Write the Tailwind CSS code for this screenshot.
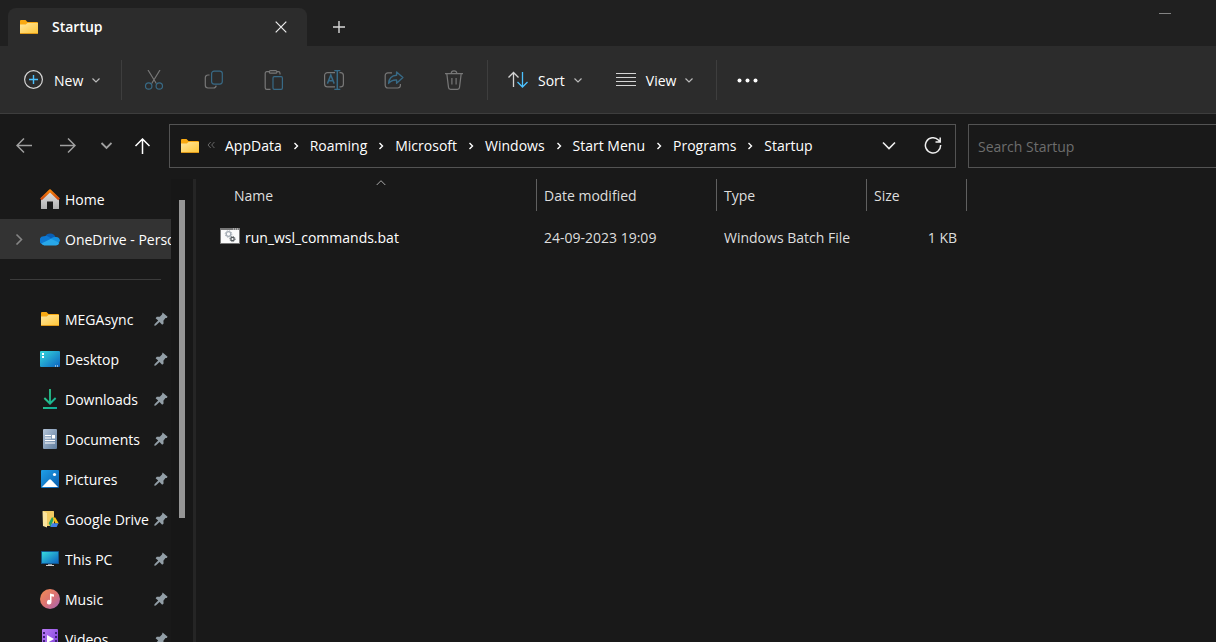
<!DOCTYPE html>
<html lang="en">
<head>
<meta charset="utf-8">
<meta name="viewport" content="width=device-width, initial-scale=1">
<title>Startup</title>
<script src="https://cdn.jsdelivr.net/npm/@tailwindcss/browser@4"></script>
</head>
<body class="flex h-screen flex-col overflow-hidden bg-[#191919] font-['Open_Sans','Noto_Sans',sans-serif] text-sm text-white">

<svg class="absolute size-0" aria-hidden="true">
  <defs>
    <linearGradient id="gFolder" x1="0" y1="0" x2="1" y2="1"><stop offset="0" stop-color="#ffe7a0"/><stop offset="1" stop-color="#ffc637"/></linearGradient>
    <linearGradient id="gWall" x1="0" y1="0" x2="0" y2="1"><stop offset="0" stop-color="#e4e4e4"/><stop offset="1" stop-color="#b0b0b0"/></linearGradient>
    <linearGradient id="gRoof" x1="0" y1="0" x2="0" y2="1"><stop offset="0" stop-color="#ff8c0a"/><stop offset="1" stop-color="#c8400c"/></linearGradient>
    <linearGradient id="gScreen" x1="0" y1="0" x2="1" y2="1"><stop offset="0" stop-color="#36d9dd"/><stop offset="1" stop-color="#0c62c0"/></linearGradient>
    <linearGradient id="gDown" x1="0" y1="0" x2="1" y2="1"><stop offset="0" stop-color="#35cf86"/><stop offset="1" stop-color="#0ea99a"/></linearGradient>
    <linearGradient id="gDoc" x1="0" y1="0" x2="1" y2="1"><stop offset="0" stop-color="#b4c4d8"/><stop offset="1" stop-color="#5f7d9e"/></linearGradient>
    <linearGradient id="gPic" x1="0" y1="0" x2="1" y2="1"><stop offset="0" stop-color="#1fa0e8"/><stop offset="1" stop-color="#0a5cae"/></linearGradient>
    <linearGradient id="gMusic" x1="0" y1="0" x2="1" y2="1"><stop offset="0" stop-color="#f48d52"/><stop offset=".5" stop-color="#dc7372"/><stop offset="1" stop-color="#a263b8"/></linearGradient>
    <linearGradient id="gVideo" x1="0" y1="0" x2="1" y2="1"><stop offset="0" stop-color="#bb7cf6"/><stop offset="1" stop-color="#7a3bd8"/></linearGradient>
  </defs>
  <symbol id="folder" viewBox="0 0 20 20">
    <path d="M1 4a1 1 0 0 1 1-1h4.500l2 2H18a1 1 0 0 1 1 1v3H1z" fill="#f9a912"/>
    <path d="M1 7.600h5.800L8.500 6H19v10.500H1z" fill="url(#gFolder)"/>
    <path d="M1 16h18v.4a.6.6 0 0 1-.6.600H1.600a.6.6 0 0 1-.6-.6z" fill="#e09a1a"/>
  </symbol>
  <symbol id="down" viewBox="0 0 12 12"><path d="M2.500 4.500L6 8l3.500-3.500" fill="none" stroke="#bbb" stroke-width="1.200"/></symbol>
  <symbol id="right" viewBox="0 0 12 12"><path d="M4.500 3l3 3-3 3" fill="none" stroke="currentColor" stroke-width="1.400"/></symbol>
  <symbol id="pin" viewBox="0 0 14 14">
    <path d="M8.600.6l5 4.200-.9 1.200-1.200.1-2.100 2.700.2 2.600-1.400 1.300-2.700-2.600L1.800 13.600l-1.500.1.200-1.400 3.700-3.700L1.600 6.200l1.200-1.400 3-.1 2.200-2.300z" fill="#929ea6"/>
  </symbol>
</svg>

<header class="flex h-[46px] shrink-0 items-end bg-[#202020] pl-2">
  <div class="flex h-[38px] w-[299px] items-center rounded-t-lg bg-[#2c2c2c] pl-[11px] pr-4">
    <svg class="size-5"><use href="#folder"/></svg>
    <h1 class="ml-[13px] font-semibold">Startup</h1>
    <button class="ml-auto flex size-5 items-center justify-center" aria-label="Close tab">
      <svg class="size-3" viewBox="0 0 12 12"><path d="M.7.7l10.600 10.600M11.300.7L.7 11.300" stroke="#eee" stroke-width="1.200"/></svg>
    </button>
  </div>
  <button class="ml-[22px] flex h-[38px] w-5 items-center justify-center" aria-label="New tab">
    <svg class="size-3" viewBox="0 0 12 12"><path d="M6 0v12M0 6h12" stroke="#d8d8d8" stroke-width="1.400"/></svg>
  </button>
  <button class="ml-auto mr-9 flex h-[46px] w-[30px] items-start justify-center pt-[13px]" aria-label="Minimize"><span class="h-px w-3 bg-[#838383]"></span></button>
</header>

<div role="toolbar" aria-label="Commands" class="flex h-[68px] shrink-0 items-center border-b border-[#3d3d3d] bg-[#2c2c2c]">
  <button class="flex h-10 w-[121px] items-center pl-[23px]">
    <svg class="size-5" viewBox="0 0 20 20" fill="none"><circle cx="10.500" cy="9.500" r="8.900" stroke="#d4d4d4" stroke-width="1.200"/><path d="M10.500 5v9M6 9.500h9" stroke="#4cc2ff" stroke-width="1.400"/></svg>
    <span class="ml-[11px] pt-0.5">New</span>
    <svg class="ml-[7px] size-3"><use href="#down"/></svg>
  </button>
  <span class="h-10 w-px bg-[#3e3e3e]"></span>
  <div class="ml-0.5 mr-[3px] flex">
    <button disabled class="flex h-10 w-[60px] items-center justify-center" aria-label="Cut">
      <svg class="size-5" viewBox="0 0 20 20" fill="none" stroke-width="1.200"><path d="M4 0l8.300 13.500M16 0L7.700 13.500" stroke="#777"/><circle cx="4.700" cy="16" r="3.200" stroke="#386a86"/><circle cx="15.300" cy="16" r="3.200" stroke="#386a86"/></svg>
    </button>
    <button disabled class="flex h-10 w-[60px] items-center justify-center" aria-label="Copy">
      <svg class="size-5" viewBox="0 0 20 20" fill="none" stroke-width="1.200"><path d="M5.500 5H4a2.700 2.700 0 0 0-2.700 2.700v7.600A2.700 2.700 0 0 0 4 18h5.500a2.700 2.700 0 0 0 2.700-2.300" stroke="#777"/><rect x="7.600" y="1.100" width="10.700" height="13" rx="2.500" stroke="#386a86"/></svg>
    </button>
    <button disabled class="flex h-10 w-[60px] items-center justify-center" aria-label="Paste">
      <svg class="size-5" viewBox="0 0 20 20" fill="none" stroke-width="1.200"><path d="M6.500 19.400H2.800a1.600 1.600 0 0 1-1.600-1.600V3.200a1.600 1.600 0 0 1 1.600-1.600h2.500m7.700 0h1.400A1.600 1.600 0 0 1 16 3.200v1.300" stroke="#777"/><rect x="5.300" y=".6" width="7.600" height="2.600" rx="1.300" stroke="#777"/><rect x="9" y="6.600" width="9.400" height="12.800" rx="1.300" stroke="#386a86"/></svg>
    </button>
    <button disabled class="flex h-10 w-[60px] items-center justify-center" aria-label="Rename">
      <svg class="size-5" viewBox="0 0 20 20" fill="none" stroke-width="1.200"><path d="M11 2.600H3.500A2.900 2.900 0 0 0 .6 5.500v8.500a2.900 2.900 0 0 0 2.900 2.900H11M15.500 2.600h1A2.900 2.900 0 0 1 19.400 5.500v8.500a2.900 2.900 0 0 1-2.900 2.900h-1" stroke="#777"/><path d="M3.400 13.600L6.800 5l3.400 8.600M4.600 10.700H9M10.300.6h6M10.300 19.400h6M13.300.6v18.800" stroke="#386a86" stroke-width="1.500"/></svg>
    </button>
    <button disabled class="flex h-10 w-[60px] items-center justify-center" aria-label="Share">
      <svg class="size-5" viewBox="0 0 20 20" fill="none" stroke-width="1.200" stroke-linejoin="round"><path d="M8 2.800H3.900A2.700 2.700 0 0 0 1.200 5.500v9.800A2.700 2.700 0 0 0 3.900 18h9.800a2.700 2.700 0 0 0 2.700-2.700V14" stroke="#777"/><path d="M12.600 2l6.300 5.600-6.300 5.600V10C9 9.800 6.500 11 4.600 13.400 5 8.500 8 5.400 12.600 5.200z" stroke="#386a86" stroke-width="1.400"/></svg>
    </button>
    <button disabled class="flex h-10 w-[60px] items-center justify-center" aria-label="Delete">
      <svg class="size-5" viewBox="0 0 20 20" fill="none" stroke="#777" stroke-width="1.200"><path d="M1 3.600h18M2.800 3.600l1.700 13.800a2 2 0 0 0 2 1.900h7a2 2 0 0 0 2-1.900l1.700-13.800M7.200 3.600a2.800 2.800 0 0 1 5.600 0M7.900 8v6.500M12.100 8v6.500"/></svg>
    </button>
  </div>
  <span class="h-10 w-px bg-[#3e3e3e]"></span>
  <button class="ml-5 flex h-10 items-center">
    <svg class="size-5" viewBox="0 0 20 20" fill="none" stroke-width="1.300"><path d="M5.500 17V2.500M.5 7.500l5-5 5 5" stroke="#d4d4d4"/><path d="M14.500 2v14.500M9.500 12l5 5 5-5" stroke="#4cc2ff"/></svg>
    <span class="ml-2.5 pt-0.5">Sort</span>
    <svg class="ml-[7px] size-3"><use href="#down"/></svg>
  </button>
  <button class="ml-8 flex h-10 w-[100px] items-center">
    <svg class="size-5" viewBox="0 0 20 20" stroke="#d4d4d4"><path d="M0 3.500h20M0 7.500h20M0 11.500h20M0 15.500h20" stroke-width="1.200"/></svg>
    <span class="ml-2.5 pt-0.5">View</span>
    <svg class="ml-[7px] size-3"><use href="#down"/></svg>
  </button>
  <span class="h-10 w-px bg-[#3e3e3e]"></span>
  <button class="ml-5 flex h-10 items-center" aria-label="More options">
    <svg class="h-5 w-[22px]" viewBox="0 0 22 20" fill="#fff"><circle cx="2.500" cy="10.500" r="2"/><circle cx="10.500" cy="10.500" r="2"/><circle cx="18.500" cy="10.500" r="2"/></svg>
  </button>
</div>

<div class="flex shrink-0 items-center pb-[11px] pl-0.5 pt-2.5">
  <button class="flex h-11 w-11 items-center justify-center" aria-label="Back"><svg class="size-4" viewBox="0 0 16 16"><path d="M16 7.500H1M8 .5l-7 7 7 7" fill="none" stroke="#a0a0a0" stroke-width="1.500"/></svg></button>
  <button class="flex h-11 w-11 items-center justify-center" aria-label="Forward"><svg class="size-4" viewBox="0 0 16 16"><path d="M0 7.500h15M8 .5l7 7-7 7" fill="none" stroke="#a0a0a0" stroke-width="1.500"/></svg></button>
  <button class="flex h-11 w-8 items-center justify-center" aria-label="Recent locations"><svg class="size-3" viewBox="0 0 12 12"><path d="M1.500 3l5 5 5-5" fill="none" stroke="#a0a0a0" stroke-width="1.800"/></svg></button>
  <button class="flex h-11 w-10 items-center justify-center" aria-label="Up"><svg class="size-4" viewBox="0 0 16 16"><path d="M8.500 16V1M1.500 8l7-7 7 7" fill="none" stroke="#fff" stroke-width="1.500"/></svg></button>
  <nav aria-label="Address" class="ml-[7px] flex h-11 min-w-0 flex-[775] items-center border border-[#535353] pl-2.5">
    <svg class="size-5 shrink-0"><use href="#folder"/></svg>
    <svg class="ml-[7px] mr-2.5 size-2 shrink-0" viewBox="0 0 8 8"><path d="M3.700 0L1 3l2.700 3M7.400 0L4.700 3l2.700 3" fill="none" stroke="#666"/></svg>
    <ol class="flex items-center whitespace-nowrap">
      <li class="flex items-center"><a href="#">AppData</a><svg class="mx-2 size-3"><use href="#right"/></svg></li>
      <li class="flex items-center"><a href="#">Roaming</a><svg class="mx-2 size-3"><use href="#right"/></svg></li>
      <li class="flex items-center"><a href="#">Microsoft</a><svg class="mx-2 size-3"><use href="#right"/></svg></li>
      <li class="flex items-center"><a href="#">Windows</a><svg class="mx-2 size-3"><use href="#right"/></svg></li>
      <li class="flex items-center"><a href="#">Start Menu</a><svg class="mx-2 size-3"><use href="#right"/></svg></li>
      <li class="flex items-center"><a href="#">Programs</a><svg class="mx-2 size-3"><use href="#right"/></svg></li>
      <li><a href="#">Startup</a></li>
    </ol>
    <button class="ml-auto flex h-10 w-11 shrink-0 items-center justify-center" aria-label="Previous locations"><svg class="h-3 w-3.5" viewBox="0 0 14 12"><path d="M1 2.500l6 6 6-6" fill="none" stroke="#eee" stroke-width="1.600"/></svg></button>
    <button class="flex h-10 w-11 shrink-0 items-center justify-center" aria-label="Refresh"><svg class="size-[18px]" viewBox="0 0 18 18" fill="none" stroke="#eee" stroke-width="1.500"><path d="M16.600 8a7.600 7.600 0 1 1-2.200-5L16 4.600M16.200.4v4.500h-4.700"/></svg></button>
  </nav>
  <input type="search" aria-label="Search Startup" placeholder="Search Startup" class="-mr-px ml-3 h-11 min-w-0 flex-[229] border border-[#535353] bg-transparent px-[9px] placeholder:text-[#6d6d6d]">
</div>

<main class="flex min-h-0 flex-1">
  <nav aria-label="Folders" class="w-[171px] shrink-0 overflow-hidden whitespace-nowrap">
    <a href="#" class="flex h-10 items-center pl-10"><svg class="mr-[5px] size-5 shrink-0" viewBox="0 0 20 20"><path d="M1 9l9-8 9 8v10.500a.5.500 0 0 1-.5.500H13v-7.500H7V20H1.500a.5.500 0 0 1-.5-.5z" fill="url(#gWall)"/><path d="M9.300.5a1 1 0 0 1 1.400 0L20 9.500l-1.800 1.700L10 3.400l-8.200 7.800L0 9.500z" fill="url(#gRoof)"/></svg><span class="pt-0.5">Home</span></a>
    <a href="#" class="flex h-10 items-center bg-[#333] pl-[13px]"><svg class="mr-[15px] size-3 shrink-0" viewBox="0 0 12 12"><path d="M3.500 1.500l5 5-5 5" fill="none" stroke="#858585" stroke-width="1.600"/></svg><svg class="mr-[5px] size-5 shrink-0" viewBox="0 0 20 20"><path d="M5 7.500a5.800 5.800 0 0 1 10.500.5L12 12.500z" fill="#0a5fb4"/><path d="M4.200 7.200c2-.6 4 0 5.500 1.300L13 11 3 15.500a4.200 4.200 0 0 1 1.200-8.300z" fill="#0d78d2"/><path d="M10 10.500c1.500-2 3.800-3 6-2.400A4.200 4.200 0 0 1 20 12l-3 3z" fill="#1490df"/><path d="M1.300 14.500L10.500 10c1 0 2 .6 3 1l5.900 2.800a3.600 3.600 0 0 1-3.400 2.700H4.300a4.300 4.300 0 0 1-3-2z" fill="#28a8ea"/></svg><span class="pt-0.5">OneDrive - Personal</span></a>
    <div class="flex h-10 items-center"><hr class="ml-2.5 w-[151px] border-[#3b3b3b]"></div>
    <a href="#" class="flex h-10 items-center pl-10 pr-[3px]"><svg class="mr-[5px] size-5 shrink-0"><use href="#folder"/></svg><span class="min-w-0 flex-1 overflow-hidden pt-0.5">MEGAsync</span><svg class="ml-0.5 size-3.5 shrink-0"><use href="#pin"/></svg></a>
    <a href="#" class="flex h-10 items-center pl-10 pr-[3px]"><svg class="mr-[5px] size-5 shrink-0" viewBox="0 0 20 20"><rect y="2" width="20" height="16" rx="1" fill="url(#gScreen)"/><path d="M2 4h2v2H2zM2 7h2v2H2zM15 16.500h1v1h-1zM17 16.500h1v1h-1z" fill="#fff"/></svg><span class="min-w-0 flex-1 overflow-hidden pt-0.5">Desktop</span><svg class="ml-0.5 size-3.5 shrink-0"><use href="#pin"/></svg></a>
    <a href="#" class="flex h-10 items-center pl-10 pr-[3px]"><svg class="mr-[5px] size-5 shrink-0" viewBox="0 0 20 20"><path d="M9.100 0h1.800v12.200L15 8.300l1.300 1.400L10 16 3.700 9.700 5 8.300l4.100 3.900zM3 18h14v2H3z" fill="url(#gDown)"/></svg><span class="min-w-0 flex-1 overflow-hidden pt-0.5">Downloads</span><svg class="ml-0.5 size-3.5 shrink-0"><use href="#pin"/></svg></a>
    <a href="#" class="flex h-10 items-center pl-10 pr-[3px]"><svg class="mr-[5px] size-5 shrink-0" viewBox="0 0 20 20"><rect x="3" width="14" height="20" rx="1" fill="url(#gDoc)"/><path d="M5 6h6v1H5zM5 8.500h6v1H5zM5 11h10v1H5zM5 13.500h10v1H5zM12 6h3v3.500h-3z" fill="#fff"/></svg><span class="min-w-0 flex-1 overflow-hidden pt-0.5">Documents</span><svg class="ml-0.5 size-3.5 shrink-0"><use href="#pin"/></svg></a>
    <a href="#" class="flex h-10 items-center pl-10 pr-[3px]"><svg class="mr-[5px] size-5 shrink-0" viewBox="0 0 20 20"><rect x="1" y="1" width="18" height="18" rx="1" fill="url(#gPic)"/><path d="M2 18l7-7.300a1.400 1.400 0 0 1 2 0L18 18z" fill="#fff"/><circle cx="14.500" cy="5.500" r="1.600" fill="#fff"/></svg><span class="min-w-0 flex-1 overflow-hidden pt-0.5">Pictures</span><svg class="ml-0.5 size-3.5 shrink-0"><use href="#pin"/></svg></a>
    <a href="#" class="flex h-10 items-center pl-10 pr-[3px]"><svg class="mr-[5px] size-5 shrink-0" viewBox="0 0 20 20"><path d="M3 2h10.500a.5.500 0 0 1 .5.500V17H3z" fill="#f1cb63"/><path d="M2.500 2L7 4v14.500L3 17z" fill="#fbe49d"/><path d="M11.800 8.500h2.600l-3.800 9.200-1.900-3.400z" fill="#1fa463"/><path d="M12.500 8.500h2.800l3.500 6h-3.300z" fill="#fbc116"/><path d="M12.100 14.200h6.300L16.700 18h-6.400z" fill="#3f7fe8"/></svg><span class="min-w-0 flex-1 overflow-hidden pt-0.5">Google Drive</span><svg class="ml-0.5 size-3.5 shrink-0"><use href="#pin"/></svg></a>
    <a href="#" class="flex h-10 items-center pl-10 pr-[3px]"><svg class="mr-[5px] size-5 shrink-0" viewBox="0 0 20 20"><path d="M8 14h4v2H8z" fill="#8a969e"/><path d="M6 16h8v1H6z" fill="#ccc"/><rect x="1" y="2" width="18" height="13" rx=".6" fill="#13568c"/><rect x="2" y="3" width="16" height="11" fill="url(#gScreen)"/></svg><span class="min-w-0 flex-1 overflow-hidden pt-0.5">This PC</span><svg class="ml-0.5 size-3.5 shrink-0"><use href="#pin"/></svg></a>
    <a href="#" class="flex h-10 items-center pl-10 pr-[3px]"><svg class="mr-[5px] size-5 shrink-0" viewBox="0 0 20 20"><circle cx="10" cy="10" r="10" fill="url(#gMusic)"/><path d="M10 4.500l4 1v2.300l-2.500-.6V13A2.300 2.300 0 1 1 10 11z" fill="#fff"/></svg><span class="min-w-0 flex-1 overflow-hidden pt-0.5">Music</span><svg class="ml-0.5 size-3.5 shrink-0"><use href="#pin"/></svg></a>
    <a href="#" class="flex h-10 items-center pl-10 pr-[3px]"><svg class="mr-[5px] size-5 shrink-0" viewBox="0 0 20 20"><rect x="2" width="16" height="20" rx="1" fill="url(#gVideo)"/><path d="M3 3h2v2H3zM3 7h2v2H3zM3 11h2v2H3zM3 15h2v2H3zM15 3h2v2h-2zM15 7h2v2h-2zM15 11h2v2h-2zM15 15h2v2h-2z" fill="#41217a"/><path d="M7 6l7 4-7 4z" fill="#fff"/></svg><span class="min-w-0 flex-1 overflow-hidden pt-0.5">Videos</span><svg class="ml-0.5 size-3.5 shrink-0"><use href="#pin"/></svg></a>
  </nav>
  <div class="w-[22px] shrink-0 bg-[#171717] pl-2 pt-[21px]"><div class="h-[318px] w-1.5 bg-[#959595]"></div></div>
  <div class="w-[3px] shrink-0 bg-[#252525]"></div>
  <section class="min-w-0 flex-1" aria-label="Files">
    <table class="w-[771px] table-fixed border-separate border-spacing-0 text-left">
      <colgroup><col class="w-[341px]"><col class="w-[180px]"><col class="w-[150px]"><col class="w-[100px]"></colgroup>
      <thead class="text-[#dedede]">
        <tr class="h-8">
          <th class="relative border-r border-[#606060] p-0 pl-[38px] pt-0.5 font-normal" aria-sort="ascending">Name<svg class="absolute left-[180px] top-0 h-2 w-2.5" viewBox="0 0 10 8"><path d="M.7 6L5 1.700 9.300 6" fill="none" stroke="#aaa"/></svg></th>
          <th class="border-r border-[#606060] p-0 pl-[7px] pt-0.5 font-normal">Date modified</th>
          <th class="border-r border-[#606060] p-0 pl-[7px] pt-0.5 font-normal">Type</th>
          <th class="border-r border-[#606060] p-0 pl-[7px] pt-0.5 font-normal">Size</th>
        </tr>
      </thead>
      <tbody class="text-[#dedede]">
        <tr class="h-[52px]">
          <td class="p-0 pl-6"><a href="#" class="flex items-center text-white"><svg class="mr-[5px] h-5 w-5 shrink-0" viewBox="0 0 20 20"><path d="M0 1h20v16H0z" fill="#777"/><path d="M1 3h18v13H1z" fill="#fafafa"/><path d="M13 1.500h1v1h-1zM15 1.500h1v1h-1zM17 1.500h1v1h-1z" fill="#ddd"/><circle cx="8.500" cy="7" r="2.300" fill="none" stroke="#a5adb5" stroke-width="1.300"/><circle cx="8.500" cy="7" r="3.300" fill="none" stroke="#a5adb5" stroke-width="1" stroke-dasharray="1.300 1.300"/><circle cx="12.500" cy="12" r="1.700" fill="none" stroke="#4f5559" stroke-width="1.200"/><circle cx="12.500" cy="12" r="2.600" fill="none" stroke="#4f5559" stroke-width="1" stroke-dasharray="1 1.040"/></svg><span class="pt-0.5">run_wsl_commands.bat</span></a></td>
          <td class="p-0 pl-[7px] pt-0.5">24-09-2023 19:09</td>
          <td class="p-0 pl-[7px] pt-0.5">Windows Batch File</td>
          <td class="p-0 pr-2.5 pt-0.5 text-right">1 KB</td>
        </tr>
      </tbody>
    </table>
  </section>
</main>
</body>
</html>
